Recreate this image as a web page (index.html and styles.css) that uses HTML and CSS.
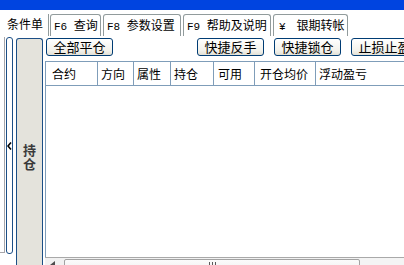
FILE: index.html
```html
<!DOCTYPE html>
<html>

<head>
    <meta charset="UTF-8">
    <title>持仓</title>
    <link rel="stylesheet" href="styles.css">
</head>

<body>
    <div class="titlebar"></div>

    <div class="tabs">
        <div class="tab tab-first">条件单</div>
        <div class="tab tab-f6"><span class="key">F6&nbsp;</span>查询</div>
        <div class="tab tab-f8"><span class="key">F8&nbsp;</span>参数设置</div>
        <div class="tab tab-f9"><span class="key">F9&nbsp;</span>帮助及说明</div>
        <div class="tab tab-bank"><span class="key key-yen">¥</span>银期转帐</div>
    </div>

    <div class="work">
        <div class="edge"></div>
        <div class="collapse">
            <svg width="5" height="8" viewBox="0 0 5 8">
                <polyline points="4,0.5 1,4 4,7.5" fill="none" stroke="#000" stroke-width="1.6" />
            </svg>
        </div>
        <div class="side"><span class="side-label">持仓</span></div>

        <div class="main">
            <div class="tools">
                <button class="btn">全部平仓</button>
                <div class="tools-right">
                    <button class="btn">快捷反手</button>
                    <button class="btn">快捷锁仓</button>
                    <button class="btn">止损止盈</button>
                </div>
            </div>

            <div class="grid">
                <div class="grid-head">
                    <div class="col col-code">合约</div>
                    <div class="col col-dir">方向</div>
                    <div class="col col-attr">属性</div>
                    <div class="col col-pos">持仓</div>
                    <div class="col col-avail">可用</div>
                    <div class="col col-price">开仓均价</div>
                    <div class="col col-pnl">浮动盈亏</div>
                </div>
                <div class="grid-body"></div>
            </div>

            <div class="hscroll">
                <div class="hs-left"><i class="hs-arrow"></i></div>
                <div class="hs-thumb"><i class="grip"></i></div>
                <div class="hs-track"></div>
            </div>
        </div>
    </div>
</body>

</html>
```

FILE: styles.css
```css
body {
    margin: 0;
    padding: 0;
    width: 404px;
    height: 265px;
    overflow: hidden;
    background-color: #fff;
    font-family: "Noto Sans CJK SC", "Liberation Sans", sans-serif;
    color: #000;
}

.titlebar {
    height: 10px;
    background-color: #0044e0;
}

/* tab strip */
.tabs {
    display: flex;
    align-items: flex-end;
    gap: 2px;
    height: 22px;
    margin-top: 4px;
    font-size: 12px;
}

.tab {
    box-sizing: border-box;
    height: 22px;
    padding-left: 3px;
    line-height: 20px;
    white-space: nowrap;
    overflow: hidden;
    border: 1px solid #919b9c;
    border-bottom: none;
    border-radius: 3px 3px 0 0;
}

.tab .key {
    font-family: "Liberation Mono", monospace;
    font-size: 11px;
}

.tab .key-yen {
    margin-right: 11px;
}

.tab-first {
    width: 49px;
    padding-left: 7px;
    border-top: none;
    border-left: none;
    border-radius: 0;
    margin-right: -1px;
}

.tab-f6 {
    width: 51px;
}

.tab-f8 {
    width: 78px;
}

.tab-f9 {
    width: 88px;
}

.tab-bank {
    width: 75px;
    padding-left: 5px;
}

/* work area */
.work {
    display: flex;
    align-items: flex-start;
    height: 229px;
    padding-top: 1px;
}

.edge {
    flex: none;
    width: 4px;
    height: 215px;
    border-right: 1px solid #a7a6aa;
    border-bottom: 1px solid #a7a6aa;
}

.collapse {
    flex: none;
    box-sizing: border-box;
    display: flex;
    align-items: center;
    justify-content: center;
    width: 7px;
    height: 217px;
    margin-left: 1px;
    background-color: #fff;
    border: 1px solid #1c4f86;
    border-radius: 3px;
}

.collapse svg {
    display: block;
}

.side {
    flex: none;
    box-sizing: border-box;
    width: 27px;
    height: 240px;
    margin: 1px 2px 0 3px;
    padding-top: 104px;
    text-align: center;
    background-color: #e4e3dc;
    border: 1px solid #1c4f86;
    border-bottom: none;
    border-radius: 3px 3px 0 0;
}

.side-label {
    display: inline-block;
    width: 13px;
    font-size: 13px;
    font-weight: bold;
    line-height: 14px;
    color: #3a3a3a;
}

.main {
    flex: none;
    width: 380px;
    padding-top: 1px;
}

/* buttons */
.tools {
    display: flex;
    width: 372px;
    height: 18px;
    margin-bottom: 5px;
    padding-left: 1px;
}

.tools-right {
    display: flex;
    gap: 10px;
    margin-left: auto;
}

.btn {
    flex: none;
    box-sizing: border-box;
    width: 67px;
    height: 18px;
    padding: 0;
    font-family: "Noto Sans CJK SC", "Liberation Sans", sans-serif;
    font-size: 13px;
    line-height: 16px;
    color: #000;
    background: linear-gradient(#ffffff, #f3f2ec 70%, #e3e1d6);
    border: 1px solid #003c74;
    border-radius: 3px;
}

/* list */
.grid {
    display: flex;
    flex-direction: column;
    height: 196px;
    border-left: 1px solid #7f9db9;
}

.grid-head {
    display: flex;
    height: 23px;
    border-top: 1px solid #7f9db9;
    border-bottom: 1px solid #7f9db9;
    font-size: 12px;
    line-height: 23px;
}

.col {
    flex: none;
    box-sizing: border-box;
    padding-left: 3px;
    border-right: 1px solid #7f9db9;
    white-space: nowrap;
}

.col-code {
    width: 52px;
    padding-left: 6px;
}

.col-dir {
    width: 36px;
}

.col-attr {
    width: 37px;
}

.col-pos {
    width: 43px;
}

.col-avail {
    width: 41px;
    padding-left: 4px;
}

.col-price {
    width: 61px;
    padding-left: 5px;
}

.col-pnl {
    width: 110px;
    border-right: none;
}

.grid-body {
    flex: 1;
}

/* horizontal scrollbar */
.hscroll {
    display: flex;
    height: 17px;
    border-top: 1px solid #a9a9a9;
    background-color: #f1f1f1;
}

.hs-left {
    flex: none;
    width: 19px;
    position: relative;
}

.hs-arrow {
    position: absolute;
    left: 5px;
    top: 3px;
    width: 0;
    height: 0;
    border-top: 4px solid transparent;
    border-bottom: 4px solid transparent;
    border-right: 5px solid #4d4d4d;
}

.hs-thumb {
    flex: none;
    box-sizing: border-box;
    display: flex;
    justify-content: center;
    width: 296px;
    height: 16px;
    margin-top: 1px;
    border: 1px solid #a2a2a2;
    border-radius: 2px;
    background: linear-gradient(#fbfbfb, #ededed);
}

.grip {
    display: block;
    width: 7px;
    height: 7px;
    margin-top: 2px;
    background: repeating-linear-gradient(to right, #5a5a5a 0 1px, transparent 1px 3px);
}

.hs-track {
    flex: 1;
    background-color: #f4f4f4;
}
```
